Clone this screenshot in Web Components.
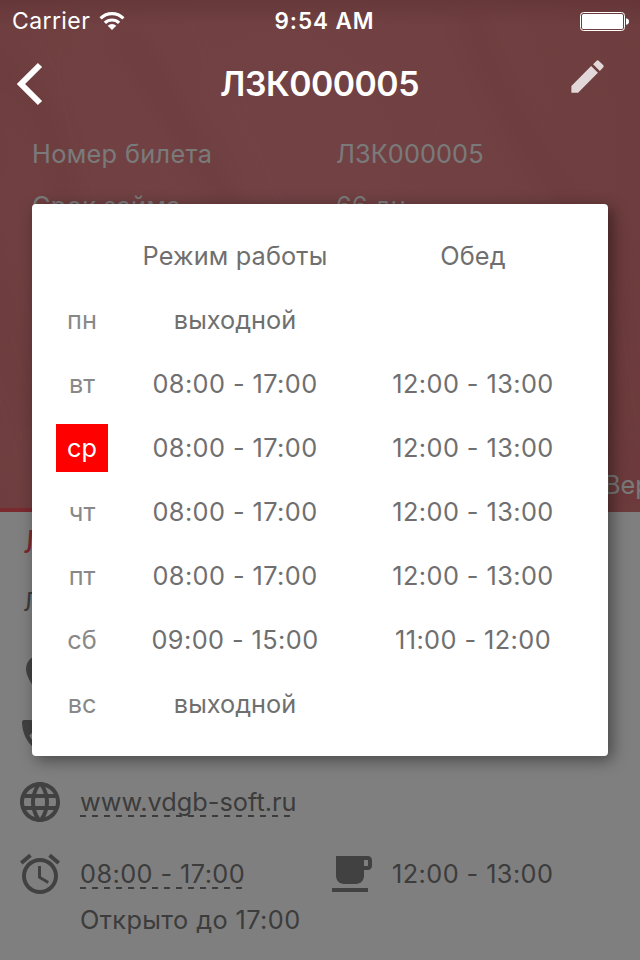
<!DOCTYPE html>
<html lang="ru">
<head>
<meta charset="utf-8">
<title>ЛЗК000005</title>
<style>
  html, body { margin: 0; height: 100%; overflow: hidden; }
  body { font: 25.3px/32px Inter, "Liberation Sans", sans-serif; }
</style>
</head>
<body>
<ticket-screen></ticket-screen>
<script>
  const define = (name, markup, setup) => {
    customElements.define(name, class extends HTMLElement {
      connectedCallback() {
        if (this.shadowRoot) return;
        this.attachShadow({ mode: 'open' }).innerHTML = markup;
        if (setup) setup(this, this.shadowRoot);
      }
    });
  };

  const ICONS = {
    pin: '<path d="M12 2C8.13 2 5 5.13 5 9c0 5.25 7 13 7 13s7-7.75 7-13c0-3.87-3.13-7-7-7z"/>',
    phone: '<path d="M6.62 10.79c1.44 2.83 3.76 5.14 6.59 6.59l2.2-2.2c.27-.27.67-.36 1.02-.24 1.12.37 2.33.57 3.57.57.55 0 1 .45 1 1V20c0 .55-.45 1-1 1-9.39 0-17-7.61-17-17 0-.55.45-1 1-1h3.5c.55 0 1 .45 1 1 0 1.25.2 2.45.57 3.57.11.35.03.74-.25 1.02l-2.2 2.2z"/>',
    globe: '<path d="M11.99 2C6.47 2 2 6.48 2 12s4.47 10 9.99 10C17.52 22 22 17.52 22 12S17.52 2 11.99 2zm6.93 6h-2.95c-.32-1.25-.78-2.45-1.38-3.56 1.84.63 3.37 1.91 4.33 3.56zM12 4.04c.83 1.2 1.48 2.53 1.91 3.96h-3.82c.43-1.43 1.08-2.76 1.91-3.96zM4.26 14C4.1 13.36 4 12.69 4 12s.1-1.36.26-2h3.38c-.08.66-.14 1.32-.14 2s.06 1.34.14 2H4.26zm.82 2h2.95c.32 1.25.78 2.45 1.38 3.56-1.84-.63-3.37-1.9-4.33-3.56zm2.95-8H5.08c.96-1.66 2.49-2.93 4.33-3.56C8.81 5.55 8.35 6.75 8.03 8zM12 19.96c-.83-1.2-1.48-2.53-1.91-3.96h3.82c-.43 1.43-1.08 2.76-1.91 3.96zM14.34 14H9.66c-.09-.66-.16-1.32-.16-2s.07-1.35.16-2h4.68c.09.65.16 1.32.16 2s-.07 1.34-.16 2zm.25 5.56c.6-1.11 1.06-2.31 1.38-3.56h2.95c-.96 1.65-2.49 2.93-4.33 3.56zM16.36 14c.08-.66.14-1.32.14-2s-.06-1.34-.14-2h3.38c.16.64.26 1.31.26 2s-.1 1.36-.26 2h-3.38z"/>',
    alarm: '<path d="M22 5.72l-4.6-3.86-1.29 1.53 4.6 3.86L22 5.72zM7.88 3.39L6.6 1.86 2 5.71l1.29 1.53 4.59-3.85zM12.5 8H11v6l4.75 2.85.75-1.23-4-2.37V8zM12 4c-4.97 0-9 4.03-9 9s4.02 9 9 9c4.97 0 9-4.03 9-9s-4.03-9-9-9zm0 16c-3.87 0-7-3.13-7-7s3.13-7 7-7 7 3.13 7 7-3.13 7-7 7z"/>',
    cup: '<path d="M20 3H4v10c0 2.21 1.79 4 4 4h6c2.21 0 4-1.79 4-4v-3h2c1.11 0 2-.89 2-2V5c0-1.11-.89-2-2-2zm0 5h-2V5h2v3zM2 21h18v-2H2v2z"/>',
    pencil: '<path d="M3 17.25V21h3.75L17.81 9.94l-3.75-3.75L3 17.25zM20.71 7.04c.39-.39.39-1.02 0-1.41l-2.34-2.34c-.39-.39-1.02-.39-1.41 0l-1.83 1.83 3.75 3.75 1.83-1.83z"/>'
  };

  define('ui-icon', `
    <style>
      :host { display: block; flex: none; width: 48px; height: 48px; }
      svg { display: block; width: 100%; height: 100%; fill: currentColor; }
    </style>
    <svg viewBox="0 0 24 24"></svg>
  `, (host, root) => {
    root.querySelector('svg').innerHTML = ICONS[host.getAttribute('name')];
  });

  define('status-bar', `
    <style>
      :host { display: grid; grid-template-columns: 1fr auto 1fr; align-items: center; height: 40px;
        padding: 0 11px 0 12px; color: #fff; font-size: 23px; line-height: 42px; }
      .left { display: flex; align-items: center; gap: 9px; letter-spacing: 0.4px; }
      .time { font-weight: 600; font-size: 22.5px; letter-spacing: 0.95px; padding-left: 8px; }
      svg { display: block; }
      .battery { justify-self: end; }
    </style>
    <div class="left"><span>Carrier</span>
      <svg width="26" height="20" viewBox="0 0 26 20" fill="none" stroke="#fff" stroke-width="3.2">
        <path d="M1.6 7.4a16.2 16.2 0 0 1 22.8 0M5.9 11.9a10.2 10.2 0 0 1 14.2 0"/>
        <path d="M13 19l-4.3-4.3a6 6 0 0 1 8.6 0z" fill="#fff" stroke="none"/>
      </svg>
    </div>
    <div class="time">9:54 AM</div>
    <svg class="battery" width="49" height="19" viewBox="0 0 49 19">
      <rect x=".5" y=".5" width="44" height="18" rx="3" fill="none" stroke="#fff"/>
      <rect x="2" y="2" width="41" height="15" rx="1.5" fill="#fff"/>
      <path d="M46 6.2q3 .5 3 3.3t-3 3.3z" fill="#fff"/>
    </svg>
  `);

  define('nav-bar', `
    <style>
      :host { display: grid; grid-template-columns: 64px 1fr 64px; align-items: center; height: 88px;
        padding: 0 10px 0 12px; color: #fff; }
      h1 { margin: 0; text-align: center; font-size: 33.8px; font-weight: 600; letter-spacing: -0.5px;
        padding-right: 3px; line-height: 34px; }
      ui-icon { width: 43px; height: 43px; color: #e2d8d9; margin-bottom: 16px; }
      .back { display: block; }
    </style>
    <svg class="back" width="32" height="44" viewBox="0 0 32 44" fill="none" stroke="#fff" stroke-width="6">
      <path d="M28 3L9 22l19 19"/>
    </svg>
    <h1><slot></slot></h1>
    <ui-icon name="pencil"></ui-icon>
  `);

  define('ticket-field', `
    <style>
      :host { display: grid; grid-template-columns: 304px 1fr; align-items: center; height: 52px;
        padding-left: 32px; color: #f4f4f4; white-space: nowrap; }
      ::slotted([slot=label]) { letter-spacing: 0.35px; }
      ::slotted(span) { letter-spacing: 0.1px; }
    </style>
    <slot name="label"></slot><slot></slot>
  `);

  define('ticket-hero', `
    <style>
      :host { display: flex; flex-direction: column; position: relative; height: 512px; overflow: hidden;
        background: linear-gradient(rgba(120, 40, 45, .18), transparent 26px),
          radial-gradient(ellipse 66% 120% at 44% 40%, #e38388 0%, #e08083 60%, #db777a 100%); }
      .field { position: absolute; inset: 0; }
      .fields { position: relative; padding-top: 128px; }
      .tabs { position: relative; display: flex; justify-content: space-between; margin-top: auto; height: 56px;
        line-height: 57px; color: #f4f4f4; }
      .marker { align-self: end; width: 320px; height: 4px; background: #f4525f; }
      .tab { width: 36px; overflow: hidden; }
    </style>
    <svg class="field" width="640" height="512" fill="none" stroke-linecap="round">
      <defs><filter id="soft"><feGaussianBlur stdDeviation="11"/></filter></defs>
      <g stroke="#c96062" stroke-width="22" opacity=".2" filter="url(#soft)">
        <path d="M-10 60Q60 110 66 200M130 40Q200 160 240 220M470 20Q520 150 600 240M0 290L30 420M620 240L632 500"/>
      </g>
      <g stroke="#ffb0b0" stroke-width="1.2" opacity=".1">
        <path d="M190 20Q220 110 256 200M205 40Q236 110 282 200M215 50L262 180M243 100L277 204M230 70L268 150M60 50Q50 90 97 200M40 40L64 90M495 20L515 50M0 380L22 440M0 400L18 460M10 330L28 390M618 300L636 420M440 120L420 170"/>
      </g>
    </svg>
    <div class="fields"><slot></slot></div>
    <div class="tabs"><span class="marker"></span><span class="tab"><slot name="tab"></slot></span></div>
  `);

  define('contact-row', `
    <style>
      :host { display: flex; align-items: center; gap: 16px; height: 72px; color: #787878; }
      ui-icon { color: #838383; }
      ::slotted(.time) { letter-spacing: 0.42px; }
      ::slotted(a) { color: inherit; text-decoration: none; line-height: 28px; padding-bottom: 1px;
        background: repeating-linear-gradient(90deg, currentColor 0 6px, transparent 6px 12px) left bottom / 100% 2px no-repeat; }
    </style>
    <ui-icon></ui-icon><slot></slot>
  `, (host, root) => {
    const icon = document.createElement('ui-icon');
    icon.setAttribute('name', host.getAttribute('icon'));
    root.querySelector('ui-icon').replaceWith(icon);
  });

  define('schedule-row', `
    <style>
      :host { display: grid; grid-template-columns: 52px 254px 1fr; align-items: center; height: 64px;
        text-align: center; color: #6f6f6f; line-height: 32px; }
      .day { height: 48px; line-height: 48px; color: #888; }
      .time { letter-spacing: 0.42px; }
      .head { letter-spacing: 0.15px; }
      :host([today]) .day { background: #f00; color: #fff; }
    </style>
    <span class="day"></span><span class="work"></span><span class="lunch"></span>
  `, (host, root) => {
    for (const part of ['day', 'work', 'lunch']) {
      const cell = root.querySelector('.' + part);
      cell.textContent = host.getAttribute(part) || '';
      if (/\d/.test(cell.textContent)) cell.classList.add('time');
      else if (!host.hasAttribute('day')) cell.classList.add('head');
    }
  });

  define('schedule-dialog', `
    <style>
      :host { position: absolute; left: 32px; top: 204px; z-index: 3; box-sizing: border-box; width: 576px; height: 552px;
        padding: 20px 24px; background: #fff; border-radius: 4px; box-shadow: 4px 4px 16px rgba(0, 0, 0, .45); }
    </style>
    <slot></slot>
  `);

  define('ticket-screen', `
    <style>
      :host { display: block; position: relative; width: 640px; height: 960px; overflow: hidden; background: #fff; }
      header { position: absolute; inset: 0 0 auto; z-index: 2; }
      .scrim { position: absolute; inset: 0; z-index: 1; background: rgba(0, 0, 0, .5); }
      .details { padding-left: 16px; }
      h2, p { margin: 0; padding-left: 7px; font-weight: 400; }
      h2 { height: 60px; line-height: 60px; font-size: 31px; color: #f4525f; }
      p { height: 68px; line-height: 60px; color: #787878; }
      .pin { height: 70px; }
      .phone { height: 56px; }
      .hours { display: grid; grid-template-columns: 312px 1fr; }
      .open { padding-left: 64px; line-height: 20px; letter-spacing: 0.4px; color: #787878; }
    </style>
    <ticket-hero>
      <ticket-field><span slot="label">Номер билета</span><span>ЛЗК000005</span></ticket-field>
      <ticket-field><span slot="label">Срок займа</span><span>66 дн.</span></ticket-field>
      <span slot="tab">Вер</span>
    </ticket-hero>
    <div class="details">
      <h2>Л</h2>
      <p>Л</p>
      <contact-row class="pin" icon="pin"></contact-row>
      <contact-row class="phone" icon="phone"></contact-row>
      <contact-row icon="globe"><a>www.vdgb-soft.ru</a></contact-row>
      <div class="hours">
        <contact-row icon="alarm"><a class="time">08:00 - 17:00</a></contact-row>
        <contact-row icon="cup"><span class="time">12:00 - 13:00</span></contact-row>
      </div>
      <div class="open">Открыто до 17:00</div>
    </div>
    <div class="scrim"></div>
    <header>
      <status-bar></status-bar>
      <nav-bar>ЛЗК000005</nav-bar>
    </header>
    <schedule-dialog>
      <schedule-row work="Режим работы" lunch="Обед"></schedule-row>
      <schedule-row day="пн" work="выходной"></schedule-row>
      <schedule-row day="вт" work="08:00 - 17:00" lunch="12:00 - 13:00"></schedule-row>
      <schedule-row day="ср" work="08:00 - 17:00" lunch="12:00 - 13:00" today></schedule-row>
      <schedule-row day="чт" work="08:00 - 17:00" lunch="12:00 - 13:00"></schedule-row>
      <schedule-row day="пт" work="08:00 - 17:00" lunch="12:00 - 13:00"></schedule-row>
      <schedule-row day="сб" work="09:00 - 15:00" lunch="11:00 - 12:00"></schedule-row>
      <schedule-row day="вс" work="выходной"></schedule-row>
    </schedule-dialog>
  `);
</script>
</body>
</html>
